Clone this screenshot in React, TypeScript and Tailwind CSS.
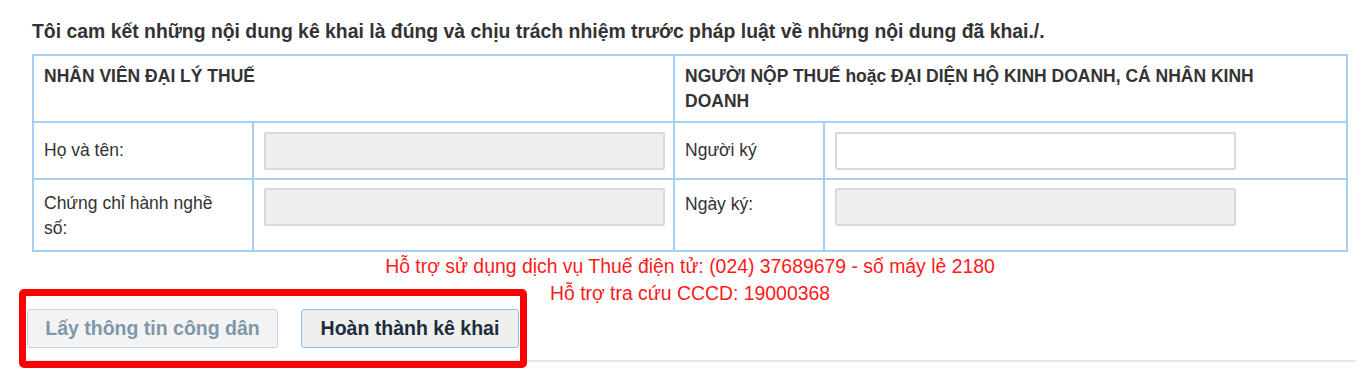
const cell = 'border-2 border-[#a6cff5] px-[10px] align-middle';

function Field({ disabled }: { disabled?: boolean }) {
  return (
    <input
      type="text"
      disabled={disabled}
      className={
        'block w-[401px] h-[38px] border-2 border-[#d9d9d9] rounded-[2px] outline-none ' +
        (disabled ? 'bg-[#efefef]' : 'bg-white')
      }
    />
  );
}

export default function App() {
  return (
    <div className="relative w-[1370px] h-[376px] overflow-hidden bg-white text-[#333] font-['Liberation_Sans',Arial,sans-serif]">
      <div className="pl-[32px] pt-[19px] w-[1348px]">
        <p className="text-[19.4px] font-bold leading-[25px] text-[#333]">
          Tôi cam kết những nội dung kê khai là đúng và chịu trách nhiệm trước pháp luật về những nội dung đã khai./.
        </p>

        <table className="mt-[10px] w-[1316px] border-collapse table-fixed text-[17.5px] leading-[25px]">
          <colgroup>
            <col className="w-[220px]" />
            <col className="w-[421px]" />
            <col className="w-[150px]" />
            <col />
          </colgroup>
          <tbody>
            <tr className="h-[67px]">
              <td colSpan={2} className={cell + ' align-top pt-[8px] font-bold'}>
                NHÂN VIÊN ĐẠI LÝ THUẾ
              </td>
              <td colSpan={2} className={cell + ' align-top pt-[8px] font-bold'}>
                NGƯỜI NỘP THUẾ hoặc ĐẠI DIỆN HỘ KINH DOANH, CÁ NHÂN KINH
                <br />
                DOANH
              </td>
            </tr>
            <tr className="h-[57px]">
              <td className={cell}>Họ và tên:</td>
              <td className={cell + ' align-top pt-[9px]'}>
                <Field disabled />
              </td>
              <td className={cell}>Người ký</td>
              <td className={cell + ' align-top pt-[9px]'}>
                <Field />
              </td>
            </tr>
            <tr className="h-[72px]">
              <td className={cell + ' align-top pt-[11px]'}>
                Chứng chỉ hành nghề
                <br />
                số:
              </td>
              <td className={cell + ' align-top pt-[8px]'}>
                <Field disabled />
              </td>
              <td className={cell + ' align-top pt-[12px]'}>Ngày ký:</td>
              <td className={cell + ' align-top pt-[8px]'}>
                <Field disabled />
              </td>
            </tr>
          </tbody>
        </table>

        <div className="w-[1316px] text-center text-[#ff1a1a] text-[19.4px] leading-[27px] mt-[1px]">
          <div>Hỗ trợ sử dụng dịch vụ Thuế điện tử: (024) 37689679 - số máy lẻ 2180</div>
          <div>Hỗ trợ tra cứu CCCD: 19000368</div>
        </div>
      </div>

      <div className="flex gap-[23px] pl-[27px] mt-[2px]">
        <button
          type="button"
          disabled
          className="w-[251px] h-[39px] rounded-[3px] border border-[#b9d7f4] bg-[#f3f3f3] text-[19.5px] font-bold text-[#7f97aa]"
        >
          Lấy thông tin công dân
        </button>
        <button
          type="button"
          className="w-[218px] h-[39px] rounded-[3px] border border-[#8fbef0] bg-[#efefef] text-[19.5px] font-bold text-[#1e2d3d]"
        >
          Hoàn thành kê khai
        </button>
      </div>

      <div className="ml-[20px] mt-[12px] w-[1336px] h-[2px] bg-[#dde9f7]" />

      <div className="absolute left-[19px] top-[289px] w-[508px] h-[79px] border-[7px] border-[#ff0000] rounded-[5px]" />
    </div>
  );
}
